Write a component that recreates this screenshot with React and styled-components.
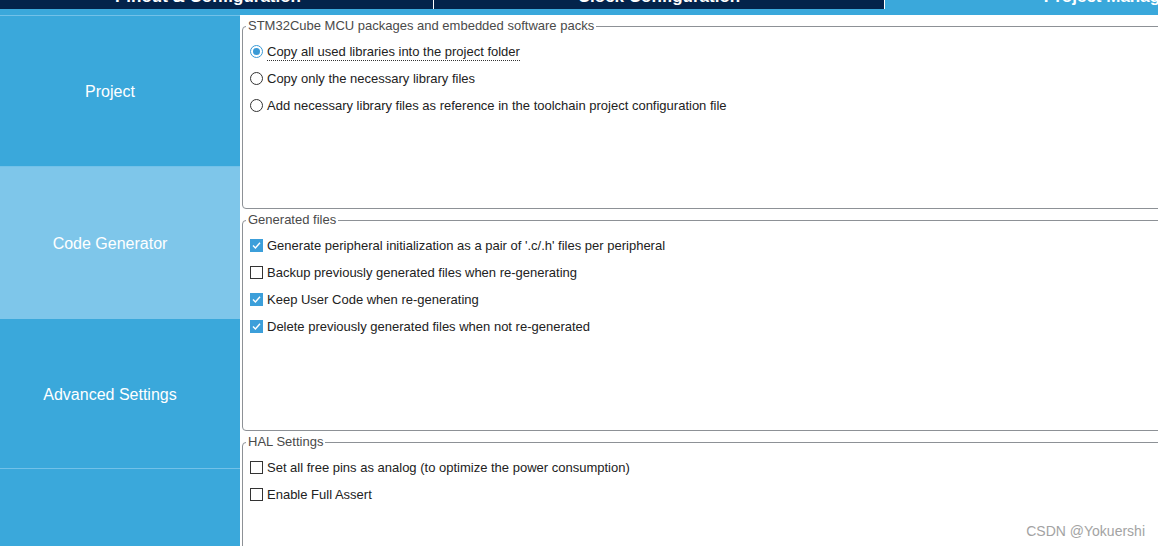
import React from 'react';
import styled, { createGlobalStyle } from 'styled-components';

const GlobalStyle = createGlobalStyle`
  html, body {
    margin: 0;
    padding: 0;
    overflow: hidden;
    background: #ffffff;
  }
  body {
    font-family: 'Liberation Sans', Arial, sans-serif;
  }
`;

const Screen = styled.div`
  position: relative;
  width: 1158px;
  height: 546px;
  overflow: hidden;
  display: flex;
  flex-direction: column;
  background: #ffffff;
`;

const TabBar = styled.div`
  display: flex;
  height: 9px;
  margin-left: -17px;
  background: #03234b;
  overflow: hidden;
  flex-shrink: 0;
`;

const Tab = styled.div`
  flex: 0 0 450px;
  height: 9px;
  overflow: hidden;
  display: flex;
  justify-content: center;
  background: ${(props) => (props.active ? '#3aa8db' : '#03234b')};
  border-right: 1px solid #ffffff;
  color: #ffffff;
  font-size: 17px;
  font-weight: bold;
  line-height: 18px;
  white-space: nowrap;

  span {
    margin-top: -12px;
  }
`;

const Strip = styled.div`
  height: 6px;
  background: #3aa8db;
  flex-shrink: 0;
`;

const Body = styled.div`
  flex: 1;
  display: flex;
  min-height: 0;
`;

const Sidebar = styled.div`
  flex: 0 0 240px;
  display: flex;
  flex-direction: column;
  background: #3aa8db;
`;

const NavItem = styled.div`
  flex: 0 0 ${(props) => props.h || 152}px;
  box-sizing: border-box;
  border-top: 1px solid ${(props) => (props.noLine ? 'transparent' : '#72c1e8')};
  padding: 2px 20px 0 0;
  display: flex;
  align-items: center;
  justify-content: center;
  background: ${(props) => (props.selected ? '#7ec6ea' : '#3aa8db')};
  color: #ffffff;
  font-size: 16px;
`;

const Panel = styled.div`
  flex: 1;
  min-width: 0;
  overflow: hidden;
  display: flex;
  flex-direction: column;
  gap: 4px;
  padding: 4px 0 0 2px;
`;

const Group = styled.fieldset`
  box-sizing: border-box;
  height: ${(props) => props.h}px;
  flex-shrink: 0;
  width: calc(100% + 20px);
  margin: 0;
  padding: 0;
  border: 1px solid #8d9196;
  border-radius: 4px;
`;

const Legend = styled.legend`
  margin-left: 3px;
  padding: 0 2px;
  font-size: 13px;
  line-height: 14px;
  color: #4a4a4a;
`;

const Options = styled.div`
  display: flex;
  flex-direction: column;
  padding: 5px 0 0 7px;
`;

const Row = styled.div`
  height: 27px;
  display: flex;
  align-items: center;
  gap: 4px;
  font-size: 13px;
  color: #222222;
`;

const Label = styled.span`
  line-height: 16px;
  border-bottom: 1px dotted ${(props) => (props.focused ? '#333333' : 'transparent')};
  margin-top: 1px;
`;

const RadioMark = styled.span`
  box-sizing: border-box;
  width: 13px;
  height: 13px;
  border-radius: 50%;
  border: 1px solid ${(props) => (props.checked ? '#3a9ad6' : '#333333')};
  background: #ffffff;
  display: flex;
  align-items: center;
  justify-content: center;

  &::after {
    content: '';
    width: 7px;
    height: 7px;
    border-radius: 50%;
    background: ${(props) => (props.checked ? '#3a9ad6' : 'transparent')};
  }
`;

const BoxMark = styled.span`
  box-sizing: border-box;
  width: 13px;
  height: 13px;
  border: 1px solid ${(props) => (props.checked ? '#3c9fda' : '#333333')};
  background: ${(props) => (props.checked ? '#3c9fda' : '#ffffff')};
  display: flex;
  align-items: center;
  justify-content: center;
`;

const Watermark = styled.div`
  position: absolute;
  right: 13px;
  bottom: 7px;
  font-size: 14px;
  color: #a3a3a3;
`;

function Radio({ checked, focused, children }) {
  return (
    <Row>
      <RadioMark checked={checked} />
      <Label focused={focused}>{children}</Label>
    </Row>
  );
}

function Check({ checked, children }) {
  return (
    <Row>
      <BoxMark checked={checked}>
        {checked && (
          <svg width="9" height="9" viewBox="0 0 9 9">
            <path d="M1 4.6 L3.4 7 L8 1.8" fill="none" stroke="#ffffff" strokeWidth="1.4" />
          </svg>
        )}
      </BoxMark>
      <Label>{children}</Label>
    </Row>
  );
}

function App() {
  return (
    <Screen>
      <GlobalStyle />
      <TabBar>
        <Tab><span>Pinout &amp; Configuration</span></Tab>
        <Tab><span>Clock Configuration</span></Tab>
        <Tab active><span>Project Manager</span></Tab>
      </TabBar>
      <Strip />
      <Body>
        <Sidebar>
          <NavItem h={151}>Project</NavItem>
          <NavItem h={153} selected>Code Generator</NavItem>
          <NavItem h={149} noLine>Advanced Settings</NavItem>
          <NavItem h={80} />
        </Sidebar>
        <Panel>
          <Group h={190}>
            <Legend>STM32Cube MCU packages and embedded software packs</Legend>
            <Options>
              <Radio checked focused>Copy all used libraries into the project folder</Radio>
              <Radio>Copy only the necessary library files</Radio>
              <Radio>Add necessary library files as reference in the toolchain project configuration file</Radio>
            </Options>
          </Group>
          <Group h={218}>
            <Legend>Generated files</Legend>
            <Options>
              <Check checked>Generate peripheral initialization as a pair of '.c/.h' files per peripheral</Check>
              <Check>Backup previously generated files when re-generating</Check>
              <Check checked>Keep User Code when re-generating</Check>
              <Check checked>Delete previously generated files when not re-generated</Check>
            </Options>
          </Group>
          <Group h={200}>
            <Legend>HAL Settings</Legend>
            <Options>
              <Check>Set all free pins as analog (to optimize the power consumption)</Check>
              <Check>Enable Full Assert</Check>
            </Options>
          </Group>
        </Panel>
      </Body>
      <Watermark>CSDN @Yokuershi</Watermark>
    </Screen>
  );
}

export default App;
